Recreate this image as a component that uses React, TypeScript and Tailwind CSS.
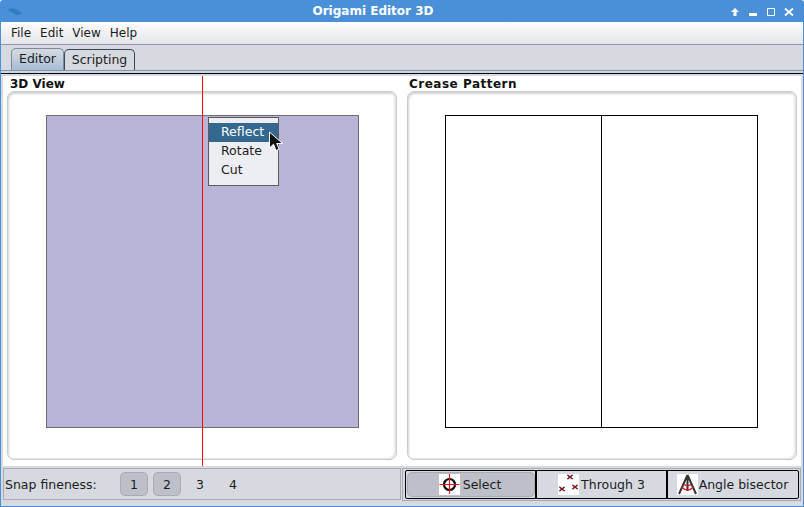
import type { ReactNode } from "react";

const uiFont = { fontFamily: '"DejaVu Sans", sans-serif' };

function Panel({ title, titleClass, children }: { title: string; titleClass: string; children: ReactNode }) {
  return (
    <section className="flex h-full w-[390px] flex-col">
      <h2 className={"h-[15px] pt-[1px] text-[12px] leading-[15px] font-bold text-[#111] " + titleClass}>{title}</h2>
      <div className="flex h-[369px] items-center justify-center rounded-[7px] border border-[#c9cacd] bg-white pb-[8px] shadow-[inset_-2px_-1px_2px_#e4e5e7,inset_1px_2px_2px_#d4d5d8]">
        {children}
      </div>
    </section>
  );
}

function SelectIcon() {
  return (
    <svg viewBox="0 0 21 21" className="h-[21px] w-[21px] bg-white">
      <circle cx="10.5" cy="10.5" r="5.5" fill="none" stroke="#111" strokeWidth="2.2" />
      <path d="M10.5 0v20M0.500 10.5h20" stroke="#e8101c" strokeWidth="1.2" />
    </svg>
  );
}

function ThroughIcon() {
  return (
    <svg viewBox="0 0 21 21" className="h-[21px] w-[21px] bg-white" fill="none" strokeWidth="1.5">
      <path d="M9.500 5l5-4M9.500 1l5 4" stroke="#222" />
      <path d="M9.500 5l5-4M9.500 1l5 4" stroke="#d00010" strokeWidth="0.8" />
      <path d="M14.500 15l5-4M14.500 11l5 4" stroke="#222" />
      <path d="M14.500 15l5-4M14.500 11l5 4" stroke="#d00010" strokeWidth="0.8" />
      <path d="M1.500 17l5-4M1.500 13l5 4" stroke="#222" />
      <path d="M1.500 17l5-4M1.500 13l5 4" stroke="#d00010" strokeWidth="0.8" />
    </svg>
  );
}

function BisectorIcon() {
  return (
    <svg viewBox="0 0 21 21" className="h-[21px] w-[21px] bg-white" fill="none">
      <path d="M10.500 1L2 20M10.500 1L19 20M10.500 1V17" stroke="#333" strokeWidth="2" />
      <path d="M4.500 13q6 6 12 0" stroke="#e01020" strokeWidth="1.4" />
      <path d="M7 10.500q3.500 2.500 7 0" stroke="#e01020" strokeWidth="1.1" />
    </svg>
  );
}

function WindowButtons() {
  return (
    <div className="absolute top-[8px] right-[9px] flex items-start gap-[10px] text-white">
      <svg viewBox="0 0 8 8" className="h-[8px] w-[8px]" fill="currentColor">
        <path d="M4 0l4 4H5.500v4h-3V4H0z" />
      </svg>
      <svg viewBox="0 0 8 8" className="h-[8px] w-[8px]" fill="currentColor">
        <path d="M0 5h8v3H0z" />
      </svg>
      <svg viewBox="0 0 8 8" className="h-[8px] w-[8px]" fill="none" stroke="currentColor" strokeWidth="1">
        <path d="M.5.500h7v7h-7z" />
      </svg>
      <svg viewBox="0 0 10 8" className="-ml-[1px] h-[8px] w-[10px]" fill="none" stroke="currentColor" strokeWidth="1.9">
        <path d="M1 .500l8 7M9 .500l-8 7" />
      </svg>
    </div>
  );
}

function SnapButton({ label, active }: { label: string; active?: boolean }) {
  return (
    <div
      className={
        "flex h-[24px] w-[28px] items-center justify-center rounded-[5px] border pt-[2px] text-[12.5px] " +
        (active ? "border-[#a9acb3] bg-[#bdc0c8]" : "border-transparent")
      }
    >
      {label}
    </div>
  );
}

export default function App() {
  return (
    <div
      style={uiFont}
      className="relative flex h-[507px] w-[804px] flex-col overflow-hidden rounded-t-[3px] bg-[#4a90d9] px-[1px] pb-[1px] text-[12.5px] text-[#1c1c1c]"
    >
      {/* title bar */}
      <header className="relative flex h-[22px] shrink-0 items-center justify-center pr-[58px] text-[12px] font-bold text-white">
        <svg viewBox="0 0 14 8" className="absolute top-[8px] left-[7px] h-[8px] w-[14px]" fill="#2f7ec4">
          <path d="M0 1c4-2 9 0 14 4-3 3-7 2-9 0C3 4 1 3 0 1z" />
        </svg>
        Origami Editor 3D
        <WindowButtons />
      </header>

      <div className="flex min-h-0 flex-1 flex-col bg-[#d6d9e0]">
        {/* menu bar */}
        <nav className="flex h-[23px] shrink-0 items-center gap-[9px] border-b border-[#9296a0] bg-gradient-to-b from-[#fdfdfd] to-[#e3e5ea] pl-[10px] text-[12px]">
          <span>File</span>
          <span>Edit</span>
          <span>View</span>
          <span>Help</span>
        </nav>

        {/* tabs */}
        <div className="flex h-[25px] shrink-0 items-end pl-[10px]">
          <div className="flex h-[22px] w-[53px] items-center justify-center rounded-t-[5px] border border-b-0 border-[#7f8a98] bg-gradient-to-b from-[#d6dbe2] to-[#a6bed4]">
            Editor
          </div>
          <div className="flex h-[21px] w-[71px] items-center justify-center rounded-t-[5px] border border-b-0 border-[#3d4656] bg-[#d6d9e0]">
            Scripting
          </div>
        </div>
        <div className="h-[3px] shrink-0 border-t border-[#8e929c] bg-[#c5d8ea]" />
        <div className="h-[1px] shrink-0 bg-black" />

        {/* editor content */}
        <div className="relative mt-[2px] flex h-[392px] shrink-0 flex-col">
          <main className="mx-[2px] flex h-[390px] gap-[10px] bg-white pl-[4px]">
            <Panel title="3D View" titleClass="pl-[3px]">
              <div className="h-[313px] w-[313px] border border-[#6d6d78] bg-[#b7b4d5]" />
            </Panel>
            <Panel title="Crease Pattern" titleClass="pl-[2px] tracking-[0.5px]">
              <div className="mr-[1px] flex h-[313px] w-[313px] justify-center border border-black bg-white pr-[1px]">
                <div className="h-full w-[1px] bg-black" />
              </div>
            </Panel>
          </main>

          {/* fold line and popup over the 3D view */}
          <div className="absolute top-0 left-[201px] h-[390px] w-[1px] bg-[#ff0000]" />
          <div className="absolute top-[41px] left-[207px] flex h-[69px] w-[71px] flex-col border border-[#5c5c5c] bg-[#eceef3] pt-[5px]">
            <div className="flex h-[19px] items-center bg-[#35688f] pl-[12px] text-white">Reflect</div>
            <div className="flex h-[19px] items-center pl-[12px]">Rotate</div>
            <div className="flex h-[19px] items-center pl-[12px]">Cut</div>
          </div>
          <svg viewBox="0 0 16 21" className="absolute top-[55px] left-[267px] h-[21px] w-[16px]">
            <path d="M1.500 1v16l4-3.800 2.500 6.300 3.200-1.300-2.500-5.700h6z" fill="#111" stroke="#fff" strokeWidth="1" />
          </svg>
        </div>

        {/* bottom toolbar */}
        <footer className="flex shrink-0 items-start gap-[1px] pl-[2px]">
          <div className="flex h-[32px] w-[398px] items-center border border-[#a9abb2] pl-[1px]">
            <span className="w-[115px] pt-[2px]">Snap fineness:</span>
            <div className="flex gap-[5px]">
              <SnapButton label="1" active />
              <SnapButton label="2" active />
              <SnapButton label="3" />
              <SnapButton label="4" />
            </div>
          </div>
          <div className="h-[33px] w-[399px] border border-[#a9abb2] py-[1px] pr-[1px] pl-[2px]">
            <div className="flex h-full rounded-[2px] border border-black">
              <div className="flex w-[131px] items-center border-r-2 border-black pl-[1px]">
                <div className="flex h-[25px] w-full items-center justify-center rounded-[5px] border border-[#a9acb3] bg-[#bdc0c8] pr-[2px]">
                  <SelectIcon />
                  <span className="ml-[3px] pt-[1px]">Select</span>
                </div>
              </div>
              <div className="flex w-[131px] items-center justify-center gap-[2px] border-r-2 border-black">
                <ThroughIcon />
                <span className="pt-[1px]">Through 3</span>
              </div>
              <div className="flex flex-1 items-center justify-center gap-[1px] pr-[1px]">
                <BisectorIcon />
                <span className="pt-[1px]">Angle bisector</span>
              </div>
            </div>
          </div>
        </footer>
      </div>
    </div>
  );
}
